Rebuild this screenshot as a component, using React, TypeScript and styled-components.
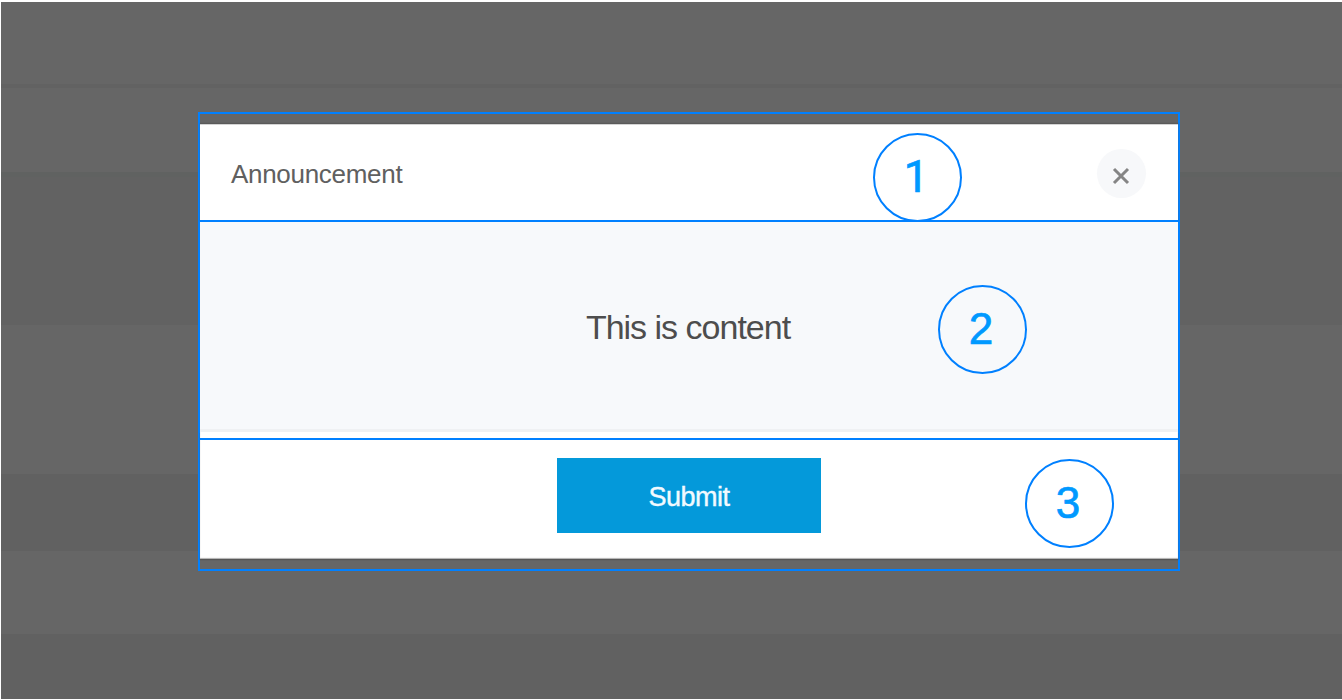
import React from "react";
import styled, { createGlobalStyle } from "styled-components";

const GlobalStyle = createGlobalStyle`
  *, *::before, *::after { box-sizing: border-box; }
  body { margin: 0; background: #fff; font-family: "Liberation Sans", Arial, sans-serif; }
`;

const Page = styled.div`
  display: grid;
  width: 1342px;
  height: 700px;
  padding: 2px 0 1px 1px;
  background: #fff;
  overflow: hidden;
`;

const Backdrop = styled.div`
  grid-area: 1 / 1;
  display: flex;
  flex-direction: column;
`;

const Stripe = styled.div<{ $height: number; $tone: string }>`
  flex: 0 0 ${(p) => p.$height}px;
  background: ${(p) => p.$tone};
`;

const Frame = styled.section`
  grid-area: 1 / 1;
  position: relative;
  display: flex;
  flex-direction: column;
  width: 982px;
  height: 459px;
  margin: 110px 0 0 197px;
  padding: 10px 0;
  border: 2px solid #0080ff;
`;

const Header = styled.header`
  display: flex;
  flex: 0 0 98px;
  align-items: center;
  justify-content: space-between;
  padding: 3px 32px 0 31px;
  background: #fff;
  border-bottom: 2px solid #0080ff;
  box-shadow: inset 0 1px 0 #d4d4d4, 0 -1px 1px #5a5a5a;
`;

const Title = styled.h1`
  margin: 0;
  color: #606060;
  font-size: 26px;
  font-weight: 400;
  line-height: 30px;
  letter-spacing: -0.3px;
`;

const CloseButton = styled.button`
  display: flex;
  align-items: center;
  justify-content: center;
  width: 49px;
  height: 49px;
  padding: 5px 2px 0 0;
  border: 0;
  border-radius: 50%;
  background: #f7f8fa;
`;

const Content = styled.div`
  display: flex;
  flex: 0 0 210px;
  align-items: center;
  justify-content: center;
  background: #f7f9fb;
  border-bottom: 3px solid #eff1f3;
`;

const Message = styled.p`
  margin: 0;
  padding: 2px 2px 0 0;
  color: #4d4d4d;
  font-size: 34px;
  line-height: 40px;
  letter-spacing: -1px;
`;

const Footer = styled.footer`
  display: flex;
  flex: 1;
  flex-direction: column;
  align-items: center;
  padding-top: 6px;
  background: #fff;
  box-shadow: inset 0 -1px 1px #b0b0b0, 0 1px 1px #565656;
`;

const FooterRule = styled.div`
  width: 100%;
  height: 2px;
  margin-bottom: 18px;
  background: #0080ff;
`;

const SubmitButton = styled.button`
  width: 264px;
  height: 75px;
  padding: 4px 0 0;
  border: 0;
  background: #0499da;
  color: #f2faff;
  font-family: inherit;
  font-size: 27px;
  letter-spacing: -0.5px;
  -webkit-text-stroke: 0.4px #f2faff;
`;

const Badge = styled.span<{ $left: number; $top: number; $font?: string }>`
  position: absolute;
  left: ${(p) => p.$left}px;
  top: ${(p) => p.$top}px;
  display: flex;
  align-items: center;
  justify-content: center;
  width: 89px;
  height: 89px;
  padding: 0 3px 2px 0;
  border: 2px solid #0080ff;
  border-radius: 50%;
  color: #0099ff;
  font-family: ${(p) => p.$font ?? '"Liberation Sans"'}, sans-serif;
  font-size: 44px;
  line-height: 48px;
  -webkit-text-stroke: 0.7px #0099ff;
`;

export default function App() {
  return (
    <Page>
      <GlobalStyle />
      <Backdrop>
        <Stripe $height={82} $tone="#666666" />
        <Stripe $height={4} $tone="#626262" />
        <Stripe $height={84} $tone="#666666" />
        <Stripe $height={5} $tone="#606261" />
        <Stripe $height={148} $tone="#626262" />
        <Stripe $height={149} $tone="#666666" />
        <Stripe $height={77} $tone="#616161" />
        <Stripe $height={83} $tone="#666666" />
        <Stripe $height={65} $tone="#616161" />
      </Backdrop>
      <Frame>
        <Header>
          <Title>Announcement</Title>
          <CloseButton aria-label="Close">
            <svg width="18" height="18" viewBox="0 0 18 18" fill="none" stroke="#858585" strokeWidth="3">
              <path d="M2 2L16 16M16 2L2 16" />
            </svg>
          </CloseButton>
        </Header>
        <Content>
          <Message>This is content</Message>
        </Content>
        <Footer>
          <FooterRule />
          <SubmitButton>Submit</SubmitButton>
        </Footer>
        <Badge $left={673} $top={19} $font="Roboto">1</Badge>
        <Badge $left={738} $top={171}>2</Badge>
        <Badge $left={825} $top={345}>3</Badge>
      </Frame>
    </Page>
  );
}
